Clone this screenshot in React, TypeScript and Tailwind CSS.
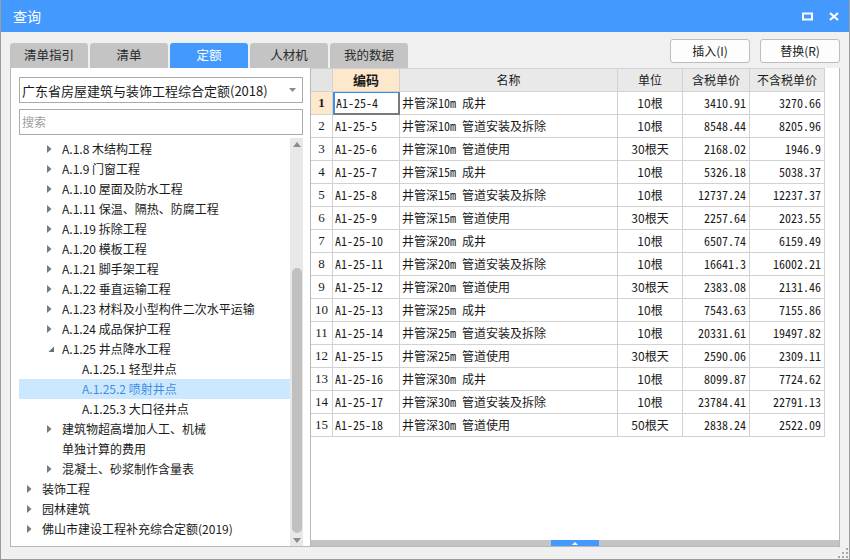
import React from "react";

const rows: [string, string, string, string, string][] = [
  ["A1-25-4", "井管深10m 成井", "10根", "3410.91", "3270.66"],
  ["A1-25-5", "井管深10m 管道安装及拆除", "10根", "8548.44", "8205.96"],
  ["A1-25-6", "井管深10m 管道使用", "30根天", "2168.02", "1946.9"],
  ["A1-25-7", "井管深15m 成井", "10根", "5326.18", "5038.37"],
  ["A1-25-8", "井管深15m 管道安装及拆除", "10根", "12737.24", "12237.37"],
  ["A1-25-9", "井管深15m 管道使用", "30根天", "2257.64", "2023.55"],
  ["A1-25-10", "井管深20m 成井", "10根", "6507.74", "6159.49"],
  ["A1-25-11", "井管深20m 管道安装及拆除", "10根", "16641.3", "16002.21"],
  ["A1-25-12", "井管深20m 管道使用", "30根天", "2383.08", "2131.46"],
  ["A1-25-13", "井管深25m 成井", "10根", "7543.63", "7155.86"],
  ["A1-25-14", "井管深25m 管道安装及拆除", "10根", "20331.61", "19497.82"],
  ["A1-25-15", "井管深25m 管道使用", "30根天", "2590.06", "2309.11"],
  ["A1-25-16", "井管深30m 成井", "10根", "8099.87", "7724.62"],
  ["A1-25-17", "井管深30m 管道安装及拆除", "10根", "23784.41", "22791.13"],
  ["A1-25-18", "井管深30m 管道使用", "50根天", "2838.24", "2522.09"],
];

type TreeItem = { level: 1 | 2 | 3; text: string; arrow?: "right" | "down"; selected?: boolean };

const tree: TreeItem[] = [
  { level: 2, text: "A.1.8 木结构工程", arrow: "right" },
  { level: 2, text: "A.1.9 门窗工程", arrow: "right" },
  { level: 2, text: "A.1.10 屋面及防水工程", arrow: "right" },
  { level: 2, text: "A.1.11 保温、隔热、防腐工程", arrow: "right" },
  { level: 2, text: "A.1.19 拆除工程", arrow: "right" },
  { level: 2, text: "A.1.20 模板工程", arrow: "right" },
  { level: 2, text: "A.1.21 脚手架工程", arrow: "right" },
  { level: 2, text: "A.1.22 垂直运输工程", arrow: "right" },
  { level: 2, text: "A.1.23 材料及小型构件二次水平运输", arrow: "right" },
  { level: 2, text: "A.1.24 成品保护工程", arrow: "right" },
  { level: 2, text: "A.1.25 井点降水工程", arrow: "down" },
  { level: 3, text: "A.1.25.1 轻型井点" },
  { level: 3, text: "A.1.25.2 喷射井点", selected: true },
  { level: 3, text: "A.1.25.3 大口径井点" },
  { level: 2, text: "建筑物超高增加人工、机械", arrow: "right" },
  { level: 2, text: "单独计算的费用" },
  { level: 2, text: "混凝土、砂浆制作含量表", arrow: "right" },
  { level: 1, text: "装饰工程", arrow: "right" },
  { level: 1, text: "园林建筑", arrow: "right" },
  { level: 1, text: "佛山市建设工程补充综合定额(2019)", arrow: "right" },
];

const tabs = ["清单指引", "清单", "定额", "人材机", "我的数据"];

function TreeRow({ item }: { item: TreeItem }) {
  const pad = item.level === 1 ? "pl-[8px]" : item.level === 2 ? "pl-[28px]" : "pl-[48px]";
  return (
    <div
      className={`flex h-[20px] items-center ${pad} ${item.selected ? "bg-[#cce8ff] text-[#3f8ee6]" : "text-[#1a1a1a]"}`}
    >
      <div className="flex w-[15px] items-center">
        {item.arrow === "right" && (
          <svg width="5" height="8" viewBox="0 0 5 8">
            <polygon points="0,0 4.5,4 0,8" fill="#7a7a7a" />
          </svg>
        )}
        {item.arrow === "down" && (
          <svg width="7" height="7" viewBox="0 0 7 7" className="ml-[1px] mt-[1px]">
            <polygon points="6,0.5 6,6 0.5,6" fill="#6e6e6e" />
          </svg>
        )}
      </div>
      <span className="whitespace-nowrap text-[12px] leading-[20px]">{item.text}</span>
    </div>
  );
}

const cols = "grid grid-cols-[22px_67px_218px_65px_67px_75px] w-[514px]";
const cell = "border-r border-b border-[#d2d2d2] overflow-hidden whitespace-nowrap";
const mono = "font-['Noto_Sans_Mono_CJK_SC','Liberation_Mono',monospace]";

export default function App() {
  return (
    <div className="relative flex h-[560px] w-[850px] flex-col overflow-hidden border-x border-b border-[#9c9c9c] bg-[#f0f0f0] font-['Noto_Sans_CJK_SC','Noto_Sans',sans-serif] text-[12px] text-[#1a1a1a]">
      {/* Title bar */}
      <div className="flex h-[32px] shrink-0 items-center justify-between bg-[#4499ff] pl-[12px] pr-[10px]">
        <span className="text-[14px] text-white">查询</span>
        <div className="flex items-center gap-[16px]">
          <svg width="11" height="9" viewBox="0 0 11 9">
            <rect x="1" y="1.5" width="9" height="6" fill="none" stroke="white" strokeWidth="2" />
          </svg>
          <svg width="10" height="9" viewBox="0 0 10 9">
            <path d="M1 1 L9 8 M9 1 L1 8" stroke="white" strokeWidth="2.2" />
          </svg>
        </div>
      </div>

      {/* Body */}
      <div className="flex flex-1 flex-col px-[9px]">
        {/* Tabs and buttons */}
        <div className="flex h-[36px] shrink-0 justify-between">
          <div className="mt-[11px] flex gap-[2px]">
            {tabs.map((t) => (
              <div
                key={t}
                className={`flex h-[25px] w-[78px] items-center justify-center rounded-t-[3px] text-[12.5px] ${
                  t === "定额" ? "bg-[#4499ff] text-white" : "bg-[#c4c4c4] text-[#2a2a2a]"
                }`}
              >
                {t}
              </div>
            ))}
          </div>
          <div className="mt-[7px] flex gap-[10px]">
            <div className="flex h-[24px] w-[80px] items-center justify-center rounded-[3px] border border-[#bdbdbd] bg-[#fdfdfd] text-[12px]">
              插入(I)
            </div>
            <div className="flex h-[24px] w-[80px] items-center justify-center rounded-[3px] border border-[#bdbdbd] bg-[#fdfdfd] text-[12px]">
              替换(R)
            </div>
          </div>
        </div>

        {/* Main panels */}
        <div className="flex h-[479px] shrink-0">
          {/* Left panel */}
          <div className="flex w-[301px] shrink-0 flex-col border-x border-b border-[#b8b8b8] bg-white pl-[8px] pr-[7px] pt-[9px]">
            <div className="flex h-[26px] shrink-0 items-center justify-between border border-[#ababab] pl-[2px] pr-[6px]">
              <span className="text-[13px] leading-none">广东省房屋建筑与装饰工程综合定额(2018)</span>
              <svg width="7" height="4" viewBox="0 0 7 4">
                <polygon points="0,0 7,0 3.5,4" fill="#8a8a8a" />
              </svg>
            </div>
            <div className="mt-[6px] flex h-[26px] shrink-0 items-center border border-[#ababab] pl-[2px]">
              <span className="text-[12px] text-[#a0a0a0]">搜索</span>
            </div>
            <div className="mt-[3px] flex flex-1">
              <div className="w-[271px] overflow-hidden pt-[1px]">
                {tree.map((it) => (
                  <TreeRow key={it.text} item={it} />
                ))}
              </div>
              <div className="flex w-[13px] flex-col items-center bg-[#e8e8e8]">
                <svg width="8" height="5" viewBox="0 0 8 5" className="mt-[4px]">
                  <polygon points="0,5 8,5 4,0" fill="#8c8c8c" />
                </svg>
                <div className="mt-[121px] h-[265px] w-[10px] rounded-full bg-[#c0c0c0]" />
                <svg width="8" height="5" viewBox="0 0 8 5" className="mt-[5px]">
                  <polygon points="0,0 8,0 4,5" fill="#8c8c8c" />
                </svg>
              </div>
            </div>
          </div>

          {/* Right panel */}
          <div className="flex flex-1 flex-col border-r border-b border-[#b8b8b8] bg-white">
            <div className="flex-1">
              {/* Header */}
              <div className={`${cols} h-[24px] border-t border-[#d2d2d2]`}>
                <div className={`${cell} bg-[#e4e4e4]`} />
                <div className={`${cell} flex items-center justify-center bg-[#fde8cc] text-[13px] font-bold`}>编码</div>
                <div className={`${cell} flex items-center justify-center bg-[#e9e9e9]`}>名称</div>
                <div className={`${cell} flex items-center justify-center bg-[#e9e9e9]`}>单位</div>
                <div className={`${cell} flex items-center justify-center bg-[#e9e9e9]`}>含税单价</div>
                <div className={`${cell} flex items-center justify-center bg-[#e9e9e9]`}>不含税单价</div>
              </div>
              {rows.map((r, i) => (
                <div key={r[0]} className={`${cols} h-[23px]`}>
                  <div
                    className={`${cell} flex items-center justify-center font-['Liberation_Serif',serif] text-[13px] ${
                      i === 0 ? "bg-[#fde8cc] font-bold" : ""
                    }`}
                  >
                    {i + 1}
                  </div>
                  {i === 0 ? (
                    <div className="flex items-center overflow-hidden whitespace-nowrap border-b-2 border-l-2 border-r-2 border-t border-b-[#7a7a7a] border-l-[#3b8cf0] border-r-[#7a7a7a] border-t-[#3b8cf0] pl-[1px]">
                      <span className={`${mono} text-[12px]`}>{r[0]}</span>
                    </div>
                  ) : (
                    <div className={`${cell} flex items-center pl-[2px]`}>
                      <span className={`${mono} text-[12px]`}>{r[0]}</span>
                    </div>
                  )}
                  <div className={`${cell} flex items-center pl-[2px]`}>
                    <span className={`${mono} text-[12px]`}>{r[1]}</span>
                  </div>
                  <div className={`${cell} flex items-center justify-center`}>{r[2]}</div>
                  <div className={`${cell} flex items-center justify-end pr-[3px]`}>
                    <span className={`${mono} text-[12px]`}>{r[3]}</span>
                  </div>
                  <div className={`${cell} flex items-center justify-end pr-[3px]`}>
                    <span className={`${mono} text-[12px]`}>{r[4]}</span>
                  </div>
                </div>
              ))}
            </div>
            {/* bottom bar */}
            <div className="flex h-[6px] shrink-0 justify-center bg-[#c4c4c4]">
              <div className="flex h-[6px] w-[48px] items-center justify-center bg-[#4499ff]">
                <svg width="6" height="3" viewBox="0 0 6 3">
                  <polygon points="0,3 6,3 3,0" fill="white" />
                </svg>
              </div>
            </div>
          </div>
        </div>
      </div>

      {/* resize grip */}
      <svg width="10" height="10" viewBox="0 0 10 10" className="absolute bottom-[1px] right-[1px]">
        <rect x="8" y="0" width="2" height="2" fill="#a8a8a8" />
        <rect x="4" y="4" width="2" height="2" fill="#a8a8a8" />
        <rect x="8" y="4" width="2" height="2" fill="#a8a8a8" />
        <rect x="0" y="8" width="2" height="2" fill="#a8a8a8" />
        <rect x="4" y="8" width="2" height="2" fill="#a8a8a8" />
        <rect x="8" y="8" width="2" height="2" fill="#a8a8a8" />
      </svg>
    </div>
  );
}
